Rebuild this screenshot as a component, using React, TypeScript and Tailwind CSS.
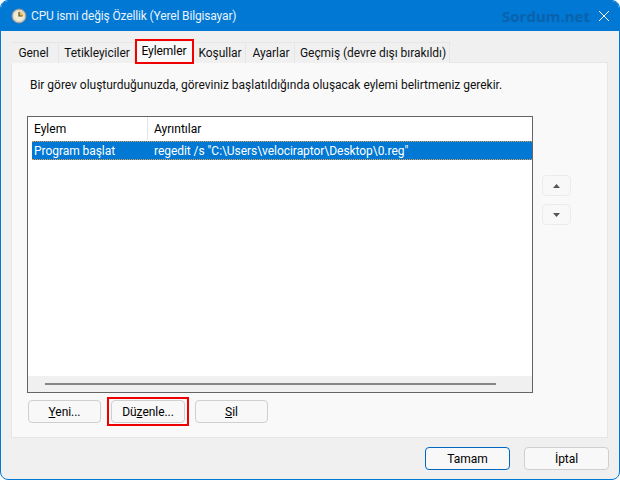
const font = { fontFamily: 'Roboto, "Noto Sans", sans-serif' };

const tabs = [
  { name: 'Genel', w: 'w-[48px] pr-[2px]' },
  { name: 'Tetikleyiciler', w: 'w-[76px] pl-[1px]' },
  { name: 'Eylemler', w: 'w-[59px]', active: true },
  { name: 'Koşullar', w: 'w-[52px] pl-[1px]' },
  { name: 'Ayarlar', w: 'w-[49px] pl-[2px]' },
  { name: 'Geçmiş (devre dışı bırakıldı)', w: 'w-[155px] pl-[2px]' },
];

function ClockIcon() {
  return (
    <svg width="16" height="16" viewBox="0 0 16 16" className="shrink-0">
      <circle cx="8" cy="8" r="7" fill="#d8d8d0" stroke="#8f8f88" strokeWidth="1" />
      <circle cx="8" cy="8" r="5" fill="#f4ecd0" />
      <path d="M8 3.5A4.5 4.5 0 0 1 12.5 8H8Z" fill="#f0c050" />
      <path d="M8 4V8H11.5" fill="none" stroke="#4a4a44" strokeWidth="1.2" />
    </svg>
  );
}

function Btn({ children, w, primary }: { children: React.ReactNode; w: string; primary?: boolean }) {
  return (
    <div
      className={`${w} h-[23px] flex items-center justify-center rounded-[4px] bg-[#f8f8f8] border text-[12px] tracking-[-0.05px] text-black ${
        primary ? 'border-[#0067c0]' : 'border-[#cfcfcf]'
      }`}
    >
      {children}
    </div>
  );
}

function ArrowBtn({ up }: { up?: boolean }) {
  return (
    <div className="w-[29px] h-[21px] flex items-center justify-center rounded-[4px] border border-[#ececec] bg-[#f8f8f8]">
      <svg width="7" height="4" viewBox="0 0 7 4">
        <path d={up ? 'M3.5 0L7 4H0Z' : 'M0 0H7L3.5 4Z'} fill="#555" />
      </svg>
    </div>
  );
}

export default function App() {
  return (
    <div className="w-[620px] h-[480px] bg-white" style={font}>
      <div className="w-full h-full flex flex-col bg-[#f0f0f0] border border-[#0078d4] rounded-lg overflow-hidden">
        {/* title bar */}
        <div className="h-[30px] shrink-0 bg-[#0078d4] flex items-center pl-[10px] pr-[10px] text-white">
          <ClockIcon />
          <span className="ml-[4px] text-[12px] tracking-[-0.15px] text-[#e8f3fc]">CPU ismi değiş Özellik (Yerel Bilgisayar)</span>
          <span className="ml-auto text-[15px] font-bold text-[#0b62ab]" style={{ fontFamily: '"Open Sans", sans-serif' }}>
            Sordum.net
          </span>
          <svg width="10" height="10" viewBox="0 0 10 10" className="ml-[9px]">
            <path d="M0 0L10 10M10 0L0 10" stroke="#fff" strokeWidth="1" />
          </svg>
        </div>

        {/* tabs */}
        <div className="flex pl-[10px] pt-[11px] h-[31px] shrink-0 relative z-10">
          {tabs.map((tab) => (
            <div
              key={tab.name}
              className={`${tab.w} h-[21px] flex items-center justify-center text-[12px] tracking-[-0.05px] text-[#111] border-t border-r border-[#e6e6e6] ${
                tab.active ? 'relative bg-[#f9f9f9] border-[#f9f9f9] text-black' : 'bg-[#f0f0f0]'
              }`}
            >
              {tab.active ? (
                <>
                  <span className="relative -top-[2px]">{tab.name}</span>
                  <span className="absolute left-[0px] right-[-1px] -top-[4px] h-[25px] border-[2px] border-[#f00000]" />
                </>
              ) : (
                tab.name
              )}
            </div>
          ))}
        </div>

        {/* panel */}
        <div className="ml-[10px] w-[597px] h-[376px] shrink-0 bg-[#f9f9f9] border border-[#e6e6e6] px-[15px] flex flex-col">
          <p className="mt-[14px] ml-[3px] text-[12px] tracking-[-0.02px] leading-[16px] text-[#111] whitespace-nowrap">
            Bir görev oluşturduğunuzda, göreviniz başlatıldığında oluşacak eylemi belirtmeniz gerekir.
          </p>

          <div className="mt-[23px] flex">
            {/* list */}
            <div className="w-[506px] h-[277px] border border-[#646464] bg-white flex flex-col">
              <div className="h-[23px] flex items-center text-[12px] text-black">
                <div className="w-[120px] h-full flex items-center pl-[6px] border-r border-[#e5e5e5]">Eylem</div>
                <div className="pl-[6px]">Ayrıntılar</div>
              </div>
              <div className="h-[19px] mt-[1px] ml-[4px] flex items-center bg-[#0078d4] text-[12px] tracking-[-0.05px] text-white border-y border-dotted border-[#e0a050]">
                <div className="w-[122px] pl-[2px]">Program başlat</div>
                <div>regedit /s "C:\Users\velociraptor\Desktop\0.reg"</div>
              </div>
              <div className="flex-1" />
              {/* scrollbar */}
              <div className="h-[16px] bg-[#f0f0f0] flex items-center pl-[17px]">
                <div className="w-[451px] h-[2px] bg-[#858585]" />
              </div>
            </div>

            {/* arrows */}
            <div className="ml-[9px] mt-[59px] flex flex-col gap-[8px]">
              <ArrowBtn up />
              <ArrowBtn />
            </div>
          </div>

          <div className="mt-[7px] ml-[1px] flex gap-[10px]">
            <Btn w="w-[73px]">
              <span><u>Y</u>eni...</span>
            </Btn>
            <div className="relative">
              <Btn w="w-[74px]">
                <span>Dü<u>z</u>enle...</span>
              </Btn>
              <span className="absolute -left-[4px] -right-[4px] -top-[3px] -bottom-[3px] border-[2px] border-[#f00000]" />
            </div>
            <Btn w="w-[73px]">
              <span><u>S</u>il</span>
            </Btn>
          </div>
        </div>

        {/* footer */}
        <div className="mt-[9px] pr-[10px] flex justify-end gap-[14px]">
          <Btn w="w-[85px]" primary>Tamam</Btn>
          <Btn w="w-[85px]">İptal</Btn>
        </div>
      </div>
    </div>
  );
}
